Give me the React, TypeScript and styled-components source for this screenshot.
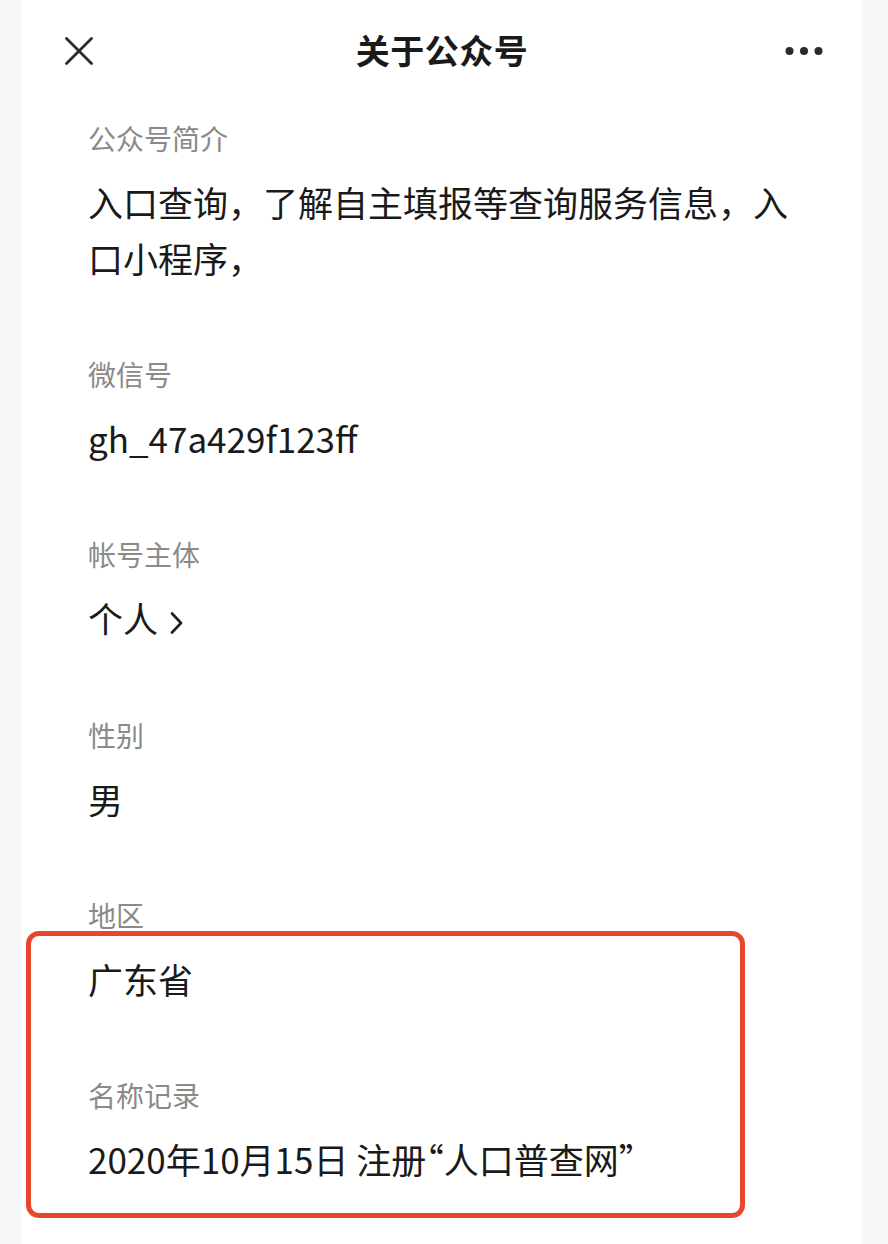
import React from 'react';
import styled, { createGlobalStyle } from 'styled-components';

type InfoItem = {
	label: string;
	value: React.ReactNode;
	link?: boolean;
};

const Quote = styled.span`
	font-feature-settings: 'halt';
`;

const items: InfoItem[] = [
	{ label: '公众号简介', value: '入口查询，了解自主填报等查询服务信息，入口小程序，' },
	{ label: '微信号', value: 'gh_47a429f123ff' },
	{ label: '帐号主体', value: '个人', link: true },
	{ label: '性别', value: '男' },
	{ label: '地区', value: '广东省' },
	{
		label: '名称记录',
		value: (
			<>
				2020年10月15日 注册<Quote>“</Quote>人口普查网<Quote>”</Quote>
			</>
		),
	},
];

const CloseIcon = () => (
	<svg width="28" height="28" viewBox="0 0 28 28" fill="none">
		<path d="M1.5 1.5 L26.5 26.5 M26.5 1.5 L1.5 26.5" stroke="#2b2b2b" strokeWidth="2.8" strokeLinecap="round" />
	</svg>
);

const MoreIcon = () => (
	<svg width="38" height="10" viewBox="0 0 38 10" fill="#2b2b2b">
		<circle cx="4.5" cy="5" r="4" />
		<circle cx="19" cy="5" r="4" />
		<circle cx="33.5" cy="5" r="4" />
	</svg>
);

const Chevron = () => (
	<svg width="13" height="22" viewBox="0 0 13 22" fill="none">
		<path d="M2 1.5 L11 11 L2 20.5" stroke="#1f1f1f" strokeWidth="2.6" strokeLinecap="round" strokeLinejoin="round" />
	</svg>
);

const App = () => {
	return (
		<>
			<GlobalStyle />
			<Page>
				<Panel>
					<Header>
						<IconButton aria-label="关闭">
							<CloseIcon />
						</IconButton>
						<Title>关于公众号</Title>
						<MoreButton aria-label="更多">
							<MoreIcon />
						</MoreButton>
					</Header>
					<InfoList>
						{items.map((item) => (
							<Item key={item.label}>
								<Label>{item.label}</Label>
								<Value>
									{item.value}
									{item.link && (
										<ChevronWrap>
											<Chevron />
										</ChevronWrap>
									)}
								</Value>
							</Item>
						))}
					</InfoList>
					<Highlight />
				</Panel>
			</Page>
		</>
	);
};

const GlobalStyle = createGlobalStyle`
	html, body {
		margin: 0;
		padding: 0;
		background: #f7f7f7;
	}
	body {
		font-family: "Noto Sans CJK SC", "Noto Sans", sans-serif;
		color: #1a1a1a;
	}
`;

const Page = styled.div`
	min-height: 100vh;
	display: flex;
	padding-left: 22px;
	padding-right: 26px;
`;

const Panel = styled.div`
	position: relative;
	flex: 1;
	background: #ffffff;
	min-height: 1244px;
`;

const Header = styled.div`
	height: 100px;
	display: grid;
	grid-template-columns: 1fr auto 1fr;
	align-items: center;
	padding: 0 39px 0 43px;
`;

const IconButton = styled.button`
	justify-self: start;
	display: flex;
	padding: 0;
	margin-top: 2px;
	border: none;
	background: none;
`;

const MoreButton = styled(IconButton)`
	justify-self: end;
`;

const Title = styled.h1`
	margin: 0 0 0 -4px;
	font-size: 34px;
	font-weight: 600;
	line-height: 40px;
	letter-spacing: 0.5px;
	color: #1a1a1a;
`;

const InfoList = styled.div`
	display: flex;
	flex-direction: column;
	gap: 68px;
	padding: 18px 54px 0 66px;
`;

const Item = styled.div`
	display: flex;
	flex-direction: column;
	gap: 16px;
`;

const Label = styled.div`
	font-size: 28px;
	line-height: 40px;
	color: #8a8a8a;
`;

const Value = styled.div`
	font-size: 35px;
	line-height: 56px;
	color: #1a1a1a;
	word-break: break-all;
`;

const ChevronWrap = styled.span`
	display: inline-block;
	margin-left: 12px;
	vertical-align: -1px;
`;

const Highlight = styled.div`
	position: absolute;
	left: 4px;
	top: 931px;
	width: 719px;
	height: 287px;
	box-sizing: border-box;
	border: 5px solid #e8452c;
	border-radius: 13px;
	pointer-events: none;
`;

export default App;
